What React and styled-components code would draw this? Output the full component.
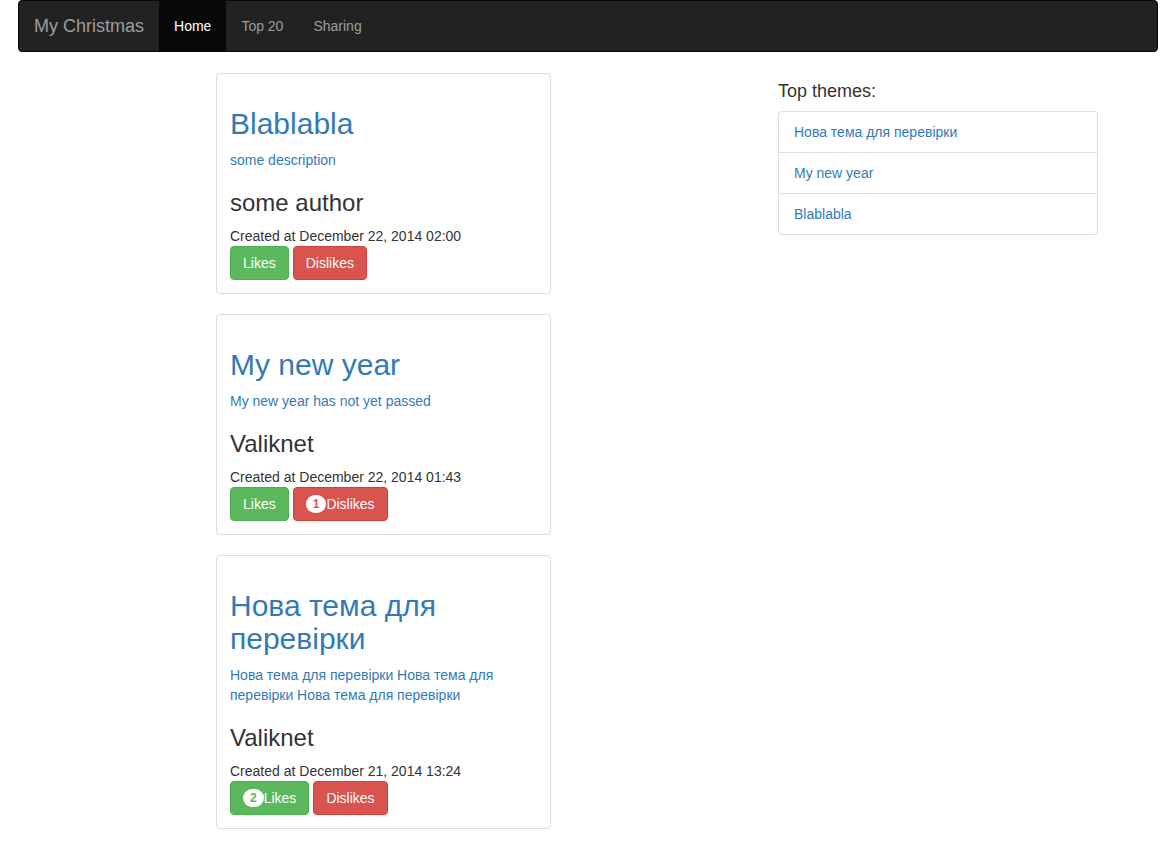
import React from "react";
import styled, { createGlobalStyle, css } from "styled-components";

const GlobalStyle = createGlobalStyle`
  body {
    margin: 0;
    font-family: "Liberation Sans", Arial, sans-serif;
    font-size: 14px;
    line-height: 20px;
    color: #333;
    background: #fff;
  }
  * { box-sizing: border-box; }
`;

const Container = styled.div`
  width: 1140px;
  margin: 0 auto;
`;

const Navbar = styled.nav`
  display: flex;
  height: 52px;
  margin-bottom: 21px;
  background: #222;
  border: 1px solid #080808;
  border-radius: 4px;
`;

const Brand = styled.a`
  padding: 15px;
  font-size: 18px;
  line-height: 20px;
  height: 50px;
  color: #9d9d9d;
  text-decoration: none;
`;

const NavLink = styled.a`
  padding: 15px;
  line-height: 20px;
  height: 50px;
  color: #9d9d9d;
  text-decoration: none;

  ${(p) =>
    p.$active &&
    css`
      color: #fff;
      background: #080808;
    `}
`;

const Main = styled.div`
  display: flex;
  align-items: flex-start;
`;

const Feed = styled.div`
  width: 335px;
  margin-left: 198px;
`;

const Sidebar = styled.aside`
  width: 320px;
  margin-left: 227px;
`;

const Card = styled.div`
  padding: 13px;
  margin-bottom: 20px;
  border: 1px solid #ddd;
  border-radius: 4px;
`;

const Title = styled.h2`
  margin: 20px 0 10px;
  font-size: 30px;
  font-weight: 500;
  line-height: 33px;
  color: #337ab7;
`;

const Description = styled.p`
  margin: 0 0 10px;
  color: #337ab7;
`;

const Author = styled.h3`
  margin: 20px 0 10px;
  font-size: 24px;
  font-weight: 500;
  line-height: 26px;
`;

const Buttons = styled.div`
  display: flex;
  gap: 4px;
`;

const tones = {
  success: { bg: "#5cb85c", border: "#4cae4c" },
  danger: { bg: "#d9534f", border: "#d43f3a" },
};

const Button = styled.button`
  height: 34px;
  padding: 6px 12px;
  font-family: inherit;
  font-size: 14px;
  line-height: 20px;
  color: #fff;
  background: ${(p) => tones[p.$tone].bg};
  border: 1px solid ${(p) => tones[p.$tone].border};
  border-radius: 4px;
  cursor: pointer;
`;

const Badge = styled.span`
  display: inline-block;
  position: relative;
  top: 1px;
  min-width: 10px;
  padding: 3px 7px;
  font-size: 12px;
  font-weight: bold;
  line-height: 1;
  text-align: center;
  vertical-align: top;
  white-space: nowrap;
  color: ${(p) => tones[p.$tone].bg};
  background: #fff;
  border-radius: 10px;
`;

const SideTitle = styled.h4`
  margin: 8px 0 10px;
  font-size: 18px;
  font-weight: 500;
  line-height: 20px;
`;

const ListGroup = styled.div`
  display: flex;
  flex-direction: column;
`;

const ListItem = styled.a`
  display: block;
  padding: 10px 15px;
  margin-bottom: -1px;
  color: #337ab7;
  text-decoration: none;
  border: 1px solid #ddd;

  &:first-child {
    border-radius: 4px 4px 0 0;
  }
  &:last-child {
    margin-bottom: 0;
    border-radius: 0 0 4px 4px;
  }
`;

const themes = [
  {
    id: 1,
    title: "Blablabla",
    description: "some description",
    author: "some author",
    created: "December 22, 2014 02:00",
    likes: 0,
    dislikes: 0,
  },
  {
    id: 2,
    title: "My new year",
    description: "My new year has not yet passed",
    author: "Valiknet",
    created: "December 22, 2014 01:43",
    likes: 0,
    dislikes: 1,
  },
  {
    id: 3,
    title: "Нова тема для перевірки",
    description:
      "Нова тема для перевірки Нова тема для перевірки Нова тема для перевірки",
    author: "Valiknet",
    created: "December 21, 2014 13:24",
    likes: 2,
    dislikes: 0,
  },
];

const topThemes = ["Нова тема для перевірки", "My new year", "Blablabla"];

const VoteButton = ({ tone, count, children }) => (
  <Button type="button" $tone={tone}>
    {count > 0 && <Badge $tone={tone}>{count}</Badge>}
    {children}
  </Button>
);

const App = () => {
  return (
    <>
      <GlobalStyle />
      <Container>
        <Navbar>
          <Brand href="#">My Christmas</Brand>
          <NavLink href="#" $active>
            Home
          </NavLink>
          <NavLink href="#">Top 20</NavLink>
          <NavLink href="#">Sharing</NavLink>
        </Navbar>

        <Main>
          <Feed>
            {themes.map((theme) => (
              <Card key={theme.id}>
                <Title>{theme.title}</Title>
                <Description>{theme.description}</Description>
                <Author>{theme.author}</Author>
                <div>Created at {theme.created}</div>
                <Buttons>
                  <VoteButton tone="success" count={theme.likes}>
                    Likes
                  </VoteButton>
                  <VoteButton tone="danger" count={theme.dislikes}>
                    Dislikes
                  </VoteButton>
                </Buttons>
              </Card>
            ))}
          </Feed>

          <Sidebar>
            <SideTitle>Top themes:</SideTitle>
            <ListGroup>
              {topThemes.map((name) => (
                <ListItem key={name} href="#">
                  {name}
                </ListItem>
              ))}
            </ListGroup>
          </Sidebar>
        </Main>
      </Container>
    </>
  );
};

export default App;
